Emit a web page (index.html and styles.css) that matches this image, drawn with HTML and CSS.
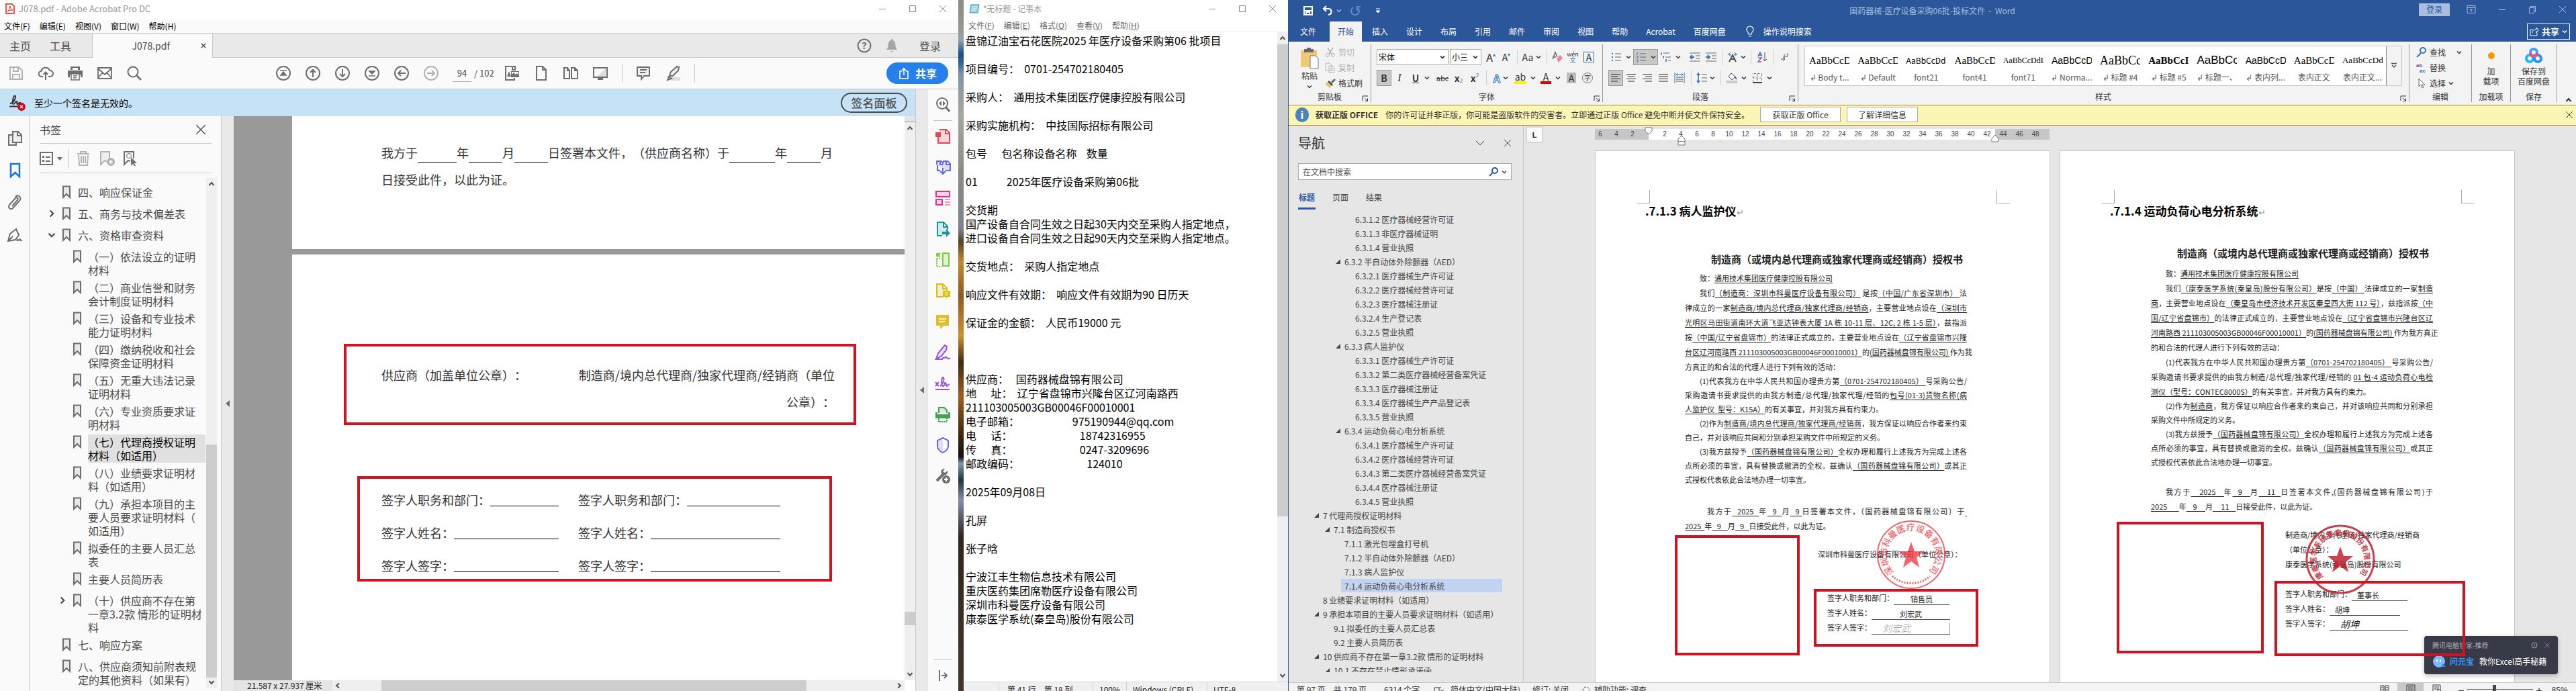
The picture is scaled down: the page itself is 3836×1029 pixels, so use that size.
FILE: index.html
```html
<!DOCTYPE html>
<html lang="zh-CN">
<head>
<meta charset="utf-8">
<title>桌面</title>
<link rel="stylesheet" href="styles.css">
</head>
<body>
<svg class="defs" aria-hidden="true">
  <symbol id="chev" viewBox="0 0 8 8"><path d="M1 2.500l3 3 3-3" fill="none" stroke="currentColor" stroke-width="1.500"/></symbol>
  <symbol id="x" viewBox="0 0 12 12"><path d="M1 1l10 10M11 1L1 11" fill="none" stroke="currentColor"/></symbol>
  <symbol id="min" viewBox="0 0 12 12"><path d="M1 6.500h10" stroke="currentColor"/></symbol>
  <symbol id="max" viewBox="0 0 12 12"><path d="M1.500 1.500h9v9h-9z" fill="none" stroke="currentColor"/></symbol>
  <symbol id="bm" viewBox="0 0 14 20"><path d="M2 1.500h10v16.500l-5-5-5 5z" fill="#e8e8e8" stroke="currentColor" stroke-width="2"/></symbol>
  <symbol id="up" viewBox="0 0 10 10"><path d="M1.500 7L5 3l3.500 4" fill="none" stroke="currentColor" stroke-width="2"/></symbol>
  <symbol id="dn" viewBox="0 0 10 10"><path d="M1.500 3L5 7l3.500-4" fill="none" stroke="currentColor" stroke-width="2"/></symbol>
  <symbol id="launch" viewBox="0 0 10 10"><path d="M1 8V1h8M4 4l4 4M8.500 4.500v4h-4" fill="none" stroke="currentColor"/></symbol>
  <symbol id="lines" viewBox="0 0 16 16"><path d="M1 2.500h14M1 6h10M1 9.500h14M1 13h10" stroke="currentColor"/></symbol>
  <symbol id="linec" viewBox="0 0 16 16"><path d="M1 2.500h14M3 6h10M1 9.500h14M3 13h10" stroke="currentColor"/></symbol>
  <symbol id="liner" viewBox="0 0 16 16"><path d="M1 2.500h14M5 6h10M1 9.500h14M5 13h10" stroke="currentColor"/></symbol>
  <symbol id="linej" viewBox="0 0 16 16"><path d="M1 2.500h14M1 6h14M1 9.500h14M1 13h14" stroke="currentColor"/></symbol>
  <symbol id="page" viewBox="0 0 24 24"><path d="M5 2h9l5 5v15H5zM14 2v5h5" fill="none" stroke="currentColor" stroke-width="2"/></symbol>
</svg>
<main class="desktop">

<section class="acro">
  <header class="a-title"><svg class="i14" viewBox="0 0 14 16"><path d="M1 1h9l3 3v11H1z" fill="#fff" stroke="#e2231a" stroke-width="1.500"/><path d="M3 12c3-2 4-5 4-8 0 3 2 5 4 6-3 0-6 1-8 2" fill="none" stroke="#e2231a"/></svg><span>J078.pdf - Adobe Acrobat Pro DC</span>
    <div class="wbtn"><button aria-label="最小化"><svg class="i12"><use href="#min"/></svg></button><button aria-label="最大化"><svg class="i12"><use href="#max"/></svg></button><button aria-label="关闭"><svg class="i12"><use href="#x"/></svg></button></div>
  </header>
  <nav class="a-menu"><button>文件(F)</button><button>编辑(E)</button><button>视图(V)</button><button>窗口(W)</button><button>帮助(H)</button></nav>
  <div class="a-tabs"><button>主页</button><button>工具</button><div class="a-tab"><span>J078.pdf</span><button aria-label="关闭标签"><svg class="i8"><use href="#x" stroke-width="2"/></svg></button></div>
    <div class="a-user"><svg class="i24" viewBox="0 0 24 24"><circle cx="12" cy="12" r="9.500" fill="none" stroke="#6e6e6e" stroke-width="2"/><text x="12" y="17" text-anchor="middle" class="q">?</text></svg><svg class="i24" viewBox="0 0 24 24"><path d="M12 2c1 0 1.500 1 1.500 2 3 1 4 4 4 8 0 3 1.500 4 2.500 6H4c1-2 2.500-3 2.500-6 0-4 1-7 4-8 0-1 .5-2 1.500-2zM10 20h4l-2 2z" fill="#a5a5a5"/></svg><button>登录</button></div>
  </div>
  <div class="a-bar">
    <div class="a-grp">
      <button aria-label="保存"><svg class="i24 dim" viewBox="0 0 24 24"><path d="M3 3h13l5 5v13H3zM8 3v6h7V3M7 21v-7h10v7" fill="none" stroke="currentColor" stroke-width="2"/></svg></button>
      <button aria-label="上传"><svg class="i24" viewBox="0 0 24 24"><path d="M8 17H6a4 4 0 0 1-.5-8A6.500 6.500 0 0 1 18 8a4.500 4.500 0 0 1 1 9h-3M12 22V11M8.500 14l3.500-3.500 3.500 3.500" fill="none" stroke="currentColor" stroke-width="2"/></svg></button>
      <button aria-label="打印"><svg class="i24" viewBox="0 0 24 24"><path d="M5 2h14v5H5zM1 8h22v10h-3v-4H4v4H1z" fill="currentColor"/><path d="M6 13h12v9H6zM9 16h6M9 19h5" fill="#fff" stroke="currentColor" stroke-width="1.500"/><path d="M8 4h8v3H8z" fill="#fafafa"/></svg></button>
      <button aria-label="邮件"><svg class="i24" viewBox="0 0 24 24"><path d="M2 4h20v16H2zM2 5l10 9L22 5M2 19l7-8M22 19l-7-8" fill="none" stroke="currentColor" stroke-width="1.800"/></svg></button>
      <button aria-label="搜索"><svg class="i24" viewBox="0 0 24 24"><circle cx="10" cy="10" r="7.500" fill="none" stroke="currentColor" stroke-width="2"/><path d="M15.500 15.500L22 22" stroke="currentColor" stroke-width="2.500"/></svg></button>
    </div>
    <div class="a-grp nav2">
      <button aria-label="首页"><svg class="i24" viewBox="0 0 24 24"><circle cx="12" cy="12" r="10" fill="none" stroke="currentColor" stroke-width="2"/><path d="M7 8h10M12 10l4 5H8z" fill="currentColor" stroke="currentColor" stroke-width="1.500"/></svg></button>
      <button aria-label="上一页"><svg class="i24" viewBox="0 0 24 24"><circle cx="12" cy="12" r="10" fill="none" stroke="currentColor" stroke-width="2"/><path d="M12 18V7M8 11l4-4 4 4" fill="none" stroke="currentColor" stroke-width="2"/></svg></button>
      <button aria-label="下一页"><svg class="i24" viewBox="0 0 24 24"><circle cx="12" cy="12" r="10" fill="none" stroke="currentColor" stroke-width="2"/><path d="M12 6v11M8 13l4 4 4-4" fill="none" stroke="currentColor" stroke-width="2"/></svg></button>
      <button aria-label="末页"><svg class="i24" viewBox="0 0 24 24"><circle cx="12" cy="12" r="10" fill="none" stroke="currentColor" stroke-width="2"/><path d="M7 16h10M12 13L8 9h8z" fill="currentColor" stroke="currentColor" stroke-width="1.500"/></svg></button>
      <button aria-label="后退"><svg class="i24" viewBox="0 0 24 24"><circle cx="12" cy="12" r="10" fill="none" stroke="currentColor" stroke-width="2"/><path d="M18 12H7M11 8l-4 4 4 4" fill="none" stroke="currentColor" stroke-width="2"/></svg></button>
      <button aria-label="前进"><svg class="i24 dim" viewBox="0 0 24 24"><circle cx="12" cy="12" r="10" fill="none" stroke="currentColor" stroke-width="2"/><path d="M6 12h11M13 8l4 4-4 4" fill="none" stroke="currentColor" stroke-width="2"/></svg></button>
    </div>
    <label class="a-pg"><input value="94" aria-label="页码"><span>/ 102</span></label>
    <div class="a-grp">
      <button aria-label="适合宽度"><svg class="i24" viewBox="0 0 24 24"><path d="M17 7V2H3v20h13v-3M13 2v5h5" fill="none" stroke="currentColor" stroke-width="2"/><path d="M5 17l3-8 3 8zM11 9h12v9H11z" fill="currentColor"/><path d="M12 14l3-3 3 3 2-2 2 3v-5H12z" fill="#fff"/></svg></button>
      <button aria-label="单页"><svg class="i24"><use href="#page"/></svg></button>
      <button aria-label="双页"><svg class="i24" viewBox="0 0 24 24"><path d="M2 4h5l3 4v12H2zM7 4v4h3M13 4h5l4 4v12h-9zM18 4v4h4" fill="none" stroke="currentColor" stroke-width="2"/></svg></button>
      <button aria-label="全屏"><svg class="i24" viewBox="0 0 24 24"><path d="M20 5v12H7z" fill="#ddd"/><path d="M2 4h20v14H2z" fill="none" stroke="currentColor" stroke-width="2"/><path d="M8 19h8v3H8z" fill="currentColor"/></svg></button>
      <i class="vsep"></i>
      <button aria-label="注释"><svg class="i24" viewBox="0 0 24 24"><path d="M3 3h18v13h-8l-4 5v-5H3zM7 7h10M7 11h8" fill="#eee" stroke="currentColor" stroke-width="2"/></svg></button>
      <button aria-label="突出显示"><svg class="i24" viewBox="0 0 24 24"><path d="M8 18h15v5H8z" fill="#ddd"/><path d="M7 16l2-6 9-8 3 1-1 5-8 8zM6 17l4 3-6 2z" fill="#eee" stroke="currentColor" stroke-width="2"/></svg></button>
      <i class="vsep"></i>
    </div>
    <button class="share"><svg class="i18" viewBox="0 0 18 18"><path d="M6 6H3v11h12V6h-3M9 12V2M6 5l3-3 3 3" fill="none" stroke="#fff" stroke-width="1.600"/></svg>共享</button>
  </div>
  <div class="a-body">
    <div class="a-main">
      <div class="a-note"><svg class="i26" viewBox="0 0 26 26"><path d="M2 14c4 0 8-5 8-10 0-2-2-2-3 1s-2 10 0 10 3-4 5-4-1 4 1 4 2-3 5-2" fill="none" stroke="#333" stroke-width="2"/><path d="M1 18.500h12" stroke="#333" stroke-width="2"/><circle cx="19" cy="19" r="6" fill="#d7001f"/><path d="M17 17l4 4m0-4l-4 4" stroke="#fff" stroke-width="1.500"/></svg><span>至少一个签名是无效的。</span><button>签名面板</button></div>
      <div class="a-work">
        <nav class="a-rail">
          <button aria-label="页面缩略图"><svg class="i24" viewBox="0 0 24 24"><path d="M9 2h8l5 5v11H9zM16 2v6h6M9 7H3v15h11v-4" fill="#eee" stroke="currentColor" stroke-width="2"/></svg></button>
          <button aria-label="书签"><svg class="i24 blue" viewBox="0 0 24 24"><path d="M6 2h13v19l-6.500-6L6 21z" fill="none" stroke="currentColor" stroke-width="2.500"/></svg></button>
          <button aria-label="附件"><svg class="i24" viewBox="0 0 24 24"><path d="M8 17l8-9c2-2-1-5-3-3l-9 10c-3 4 2 8 5 5l10-11c4-5-2-10-6-6" fill="none" stroke="currentColor" stroke-width="2"/></svg></button>
          <button aria-label="签名"><svg class="i24" viewBox="0 0 24 24"><path d="M2 21l3-11 9-7 4 9-5 7zM3 20l6-6M15 21c2-5 2 1 4-2s1 3 4 1" fill="none" stroke="currentColor" stroke-width="2"/></svg></button>
        </nav>
        <aside class="a-book">
          <header><h2>书签</h2><button aria-label="关闭"><svg class="i16"><use href="#x"/></svg></button></header>
          <div class="b-tools">
            <svg class="i20" viewBox="0 0 20 20"><path d="M1 1h18v18H1z" fill="none" stroke="currentColor" stroke-width="2"/><path d="M4 6h3v3H4zM4 12h3v3H4zM9 7h7v2H9zM9 13h7v2H9z" fill="currentColor"/></svg>
            <svg class="i8" viewBox="0 0 8 8"><path d="M0 2h8L4 7z" fill="currentColor"/></svg><i class="vsep"></i>
            <svg class="i24 dim" viewBox="0 0 24 24"><path d="M3 5h18M8 5V2h8v3M5 7l1 15h12l1-15M9 8v11M12 8v11M15 8v11" fill="none" stroke="currentColor" stroke-width="2"/></svg>
            <svg class="i24 dim" viewBox="0 0 24 24"><path d="M12 17l-3-2-6 6V2h13v10" fill="#eee" stroke="currentColor" stroke-width="2"/><circle cx="18" cy="17" r="6" fill="currentColor"/><path d="M15 17h6M18 14v6" stroke="#fff" stroke-width="1.500"/></svg>
            <svg class="i24" viewBox="0 0 24 24"><path d="M12 16l-3-1-6 6V2h14v10" fill="none" stroke="currentColor" stroke-width="2"/><circle cx="10" cy="8" r="3.500" fill="none" stroke="currentColor"/><path d="M13 10l9 9h-4l2 4-2 0-2-3-3 3z" fill="currentColor"/></svg>
          </div>
          <div class="b-wrap">
            <ul class="b-list">
              <li><b></b><svg><use href="#bm"/></svg><a href="#">四、响应保证金</a></li>
              <li><b><svg class="rot"><use href="#chev"/></svg></b><svg><use href="#bm"/></svg><a href="#">五、商务与技术偏差表</a></li>
              <li><b><svg><use href="#chev"/></svg></b><svg><use href="#bm"/></svg><a href="#">六、资格审查资料</a></li>
              <li class="k"><b></b><svg><use href="#bm"/></svg><a href="#">（一）依法设立的证明<br>材料</a></li>
              <li class="k"><b></b><svg><use href="#bm"/></svg><a href="#">（二）商业信誉和财务<br>会计制度证明材料</a></li>
              <li class="k"><b></b><svg><use href="#bm"/></svg><a href="#">（三）设备和专业技术<br>能力证明材料</a></li>
              <li class="k"><b></b><svg><use href="#bm"/></svg><a href="#">（四）缴纳税收和社会<br>保障资金证明材料</a></li>
              <li class="k"><b></b><svg><use href="#bm"/></svg><a href="#">（五）无重大违法记录<br>证明材料</a></li>
              <li class="k"><b></b><svg><use href="#bm"/></svg><a href="#">（六）专业资质要求证<br>明材料</a></li>
              <li class="k on"><b></b><svg><use href="#bm"/></svg><a href="#">（七）代理商授权证明<br>材料（如适用）</a></li>
              <li class="k"><b></b><svg><use href="#bm"/></svg><a href="#">（八）业绩要求证明材<br>料（如适用）</a></li>
              <li class="k"><b></b><svg><use href="#bm"/></svg><a href="#">（九）承担本项目的主<br>要人员要求证明材料（<br>如适用）</a></li>
              <li class="k"><b></b><svg><use href="#bm"/></svg><a href="#">拟委任的主要人员汇总<br>表</a></li>
              <li class="k"><b></b><svg><use href="#bm"/></svg><a href="#">主要人员简历表</a></li>
              <li class="k"><b><svg class="rot"><use href="#chev"/></svg></b><svg><use href="#bm"/></svg><a href="#">（十）供应商不存在第<br>一章3.2款 情形的证明材<br>料</a></li>
              <li><b></b><svg><use href="#bm"/></svg><a href="#">七、响应方案</a></li>
              <li><b></b><svg><use href="#bm"/></svg><a href="#">八、供应商须知前附表规<br>定的其他资料（如果有）</a></li>
            </ul>
            <div class="sb"><svg class="i10"><use href="#up"/></svg><i class="th1"></i><svg class="i10"><use href="#dn"/></svg></div>
          </div>
        </aside>
        <div class="strip"><svg class="i10" viewBox="0 0 10 10"><path d="M8 0v10L2 5z" fill="#6e6e6e"/></svg></div>
        <div class="a-doc">
          <div class="a-view">
            <div class="pages">
              <article class="p1">
                <p>我方于<i class="w58"></i>年<i class="w50"></i>月<i class="w50"></i>日签署本文件，（供应商名称）于<i class="w68"></i>年<i class="w50"></i>月</p>
                <p>日接受此件，以此为证。</p>
              </article>
              <article class="p2">
                <div class="box1"><p><span>供应商（加盖单位公章）：</span><span>制造商/境内总代理商/独家代理商/经销商（单位</span></p><p class="r">公章）：</p></div>
                <div class="box2">
                  <p>签字人职务和部门：<i></i></p><p>签字人职务和部门：<i></i></p>
                  <p>签字人姓名：<i></i></p><p>签字人姓名：<i></i></p>
                  <p>签字人签字：<i></i></p><p>签字人签字：<i></i></p>
                </div>
              </article>
            </div>
            <div class="sb"><i class="split"></i><svg class="i10"><use href="#up"/></svg><i class="th2"></i><svg class="i10"><use href="#dn"/></svg></div>
          </div>
          <div class="a-foot"><span>21.587 x 27.937 厘米</span><div class="hs"><svg class="i10 rotl"><use href="#dn"/></svg><i></i><svg class="i10 rot"><use href="#dn"/></svg></div></div>
        </div>
      </div>
    </div>
    <div class="strip s2"><svg class="i10" viewBox="0 0 10 10"><path d="M8 0v10L2 5z" fill="#6e6e6e"/></svg></div>
    <nav class="a-tools">
      <button aria-label="查找工具"><svg class="i24" viewBox="0 0 24 24"><circle cx="11" cy="10" r="8" fill="#fff" stroke="#6e6e6e" stroke-width="2"/><path d="M10 6v8l-4-4zM12 6v8l4-4z" fill="#6e6e6e"/><path d="M17 16l5 6" stroke="#6e6e6e" stroke-width="3"/></svg></button>
      <hr>
      <button aria-label="创建"><svg class="i24" viewBox="0 0 24 24" color="#e34850"><path d="M7 2h10l5 5v15H5V12M16 2v6h6" fill="#fad4d6" stroke="currentColor" stroke-width="2"/><path d="M1 6h8v7H1z" fill="currentColor"/></svg></button>
      <button aria-label="合并"><svg class="i24" viewBox="0 0 24 24" color="#6767ec"><path d="M3 8V3h7l2 3 1-3h6l4 4v10h-7M8 17H4V9M8 3v5h4M17 3v5h5" fill="#dedefa" stroke="currentColor" stroke-width="2"/><path d="M12 13v9M8 18l4 4 4-4" fill="none" stroke="currentColor" stroke-width="2"/></svg></button>
      <button aria-label="组织"><svg class="i24" viewBox="0 0 24 24" color="#d83790"><path d="M2 2h20v8H2zM2 14h9v8H2z" fill="#f6d3e5" stroke="currentColor" stroke-width="2"/><path d="M15 14h8M15 18h8M15 22h8" stroke="currentColor"/></svg></button>
      <button aria-label="导出"><svg class="i24" viewBox="0 0 24 24" color="#1b959a"><path d="M11 22H4V2h9l6 6v5M13 2v7h6" fill="#d1eaeb" stroke="currentColor" stroke-width="2"/><path d="M11 16h6v-4l6 6-6 6v-4h-6z" fill="currentColor"/></svg></button>
      <button aria-label="页面整理"><svg class="i24" viewBox="0 0 24 24" color="#7fce3c"><path d="M12 2h9v19h-9z" fill="#e1f3d2" stroke="currentColor" stroke-width="2"/><path d="M3 10v12h7M3 10h7" fill="none" stroke="currentColor" stroke-width="2" stroke-dasharray="2 1"/><path d="M2 2h3l4-1-2 4 2 3-7-1z" fill="currentColor"/></svg></button>
      <button aria-label="审阅"><svg class="i24" viewBox="0 0 24 24" color="#dcbf10"><path d="M12 21H3V2h9l6 6v5M12 2v7h6" fill="#f6edc4" stroke="currentColor" stroke-width="2"/><path d="M12 12h11v9h-4l-3 3v-3h-4z" fill="currentColor"/><path d="M15 15h5M15 18h4" stroke="#fff"/></svg></button>
      <button aria-label="注释"><svg class="i24" viewBox="0 0 24 24" color="#dfbf2c"><path d="M2 2h19v16h-8l-5 5v-5H2z" fill="currentColor"/><path d="M6 8h11M6 12h9" stroke="#fff" stroke-width="1.500"/></svg></button>
      <button aria-label="填写和签名"><svg class="i24" viewBox="0 0 24 24" color="#9256d9"><path d="M2 22l3-9L15 1l3 2-1 5-7 9-8 5h9c3-6 4 0 5-3s2 5 7 1" fill="#e9ddf8" stroke="currentColor" stroke-width="2"/></svg></button>
      <button aria-label="签名"><svg class="i24" viewBox="0 0 24 24" color="#9256d9"><path d="M1 10l5 6m0-6l-5 6M8 16c7-6 6-14 4-13s-3 12 0 13 2-7 4-5 0 5 2 5 1-4 4-2M1 21h21" fill="none" stroke="currentColor" stroke-width="2"/></svg></button>
      <button aria-label="扫描"><svg class="i24" viewBox="0 0 24 24" color="#3da74e"><path d="M6 10V2h8l4 4v4" fill="#d9eedb" stroke="currentColor" stroke-width="2"/><path d="M1 9h3v3h16V9h3v9H1z" fill="currentColor"/><path d="M6 18v5h12v-5" fill="#fff" stroke="currentColor" stroke-width="2" stroke-dasharray="2 1"/></svg></button>
      <button aria-label="保护"><svg class="i24" viewBox="0 0 24 24" color="#6767ec"><path d="M12 1l8 4v9c0 4-5 8-8 9-3-1-8-5-8-9V5z" fill="#fff" stroke="currentColor" stroke-width="2"/><path d="M12 3v18c-3-1-7-4-7-7V6z" fill="#dedefa"/></svg></button>
      <button aria-label="更多工具"><svg class="i24" viewBox="0 0 24 24"><path d="M3 19L13 9" stroke="#6e6e6e" stroke-width="4"/><path d="M19 4l-4 3-3-2 3-4c-6 0-7 5-4 9 4 2 9 0 8-6z" fill="#6e6e6e"/><circle cx="17" cy="17" r="6" fill="#6e6e6e"/><path d="M14 17h6M17 14v6" stroke="#fff" stroke-width="2"/></svg></button>
      <hr class="low">
      <button aria-label="折叠"><svg class="i18" viewBox="0 0 18 18"><path d="M4 1v16M7 9h8M11 5l4 4-4 4" fill="none" stroke="#6e6e6e" stroke-width="2"/></svg></button>
    </nav>
  </div>
</section>

<div class="wall"></div>

<section class="note">
  <header class="n-title"><svg class="i16" viewBox="0 0 16 16"><path d="M3 2h12l-2 12H1z" fill="#8fd0e0" stroke="#4b8fa0"/><path d="M4 5h9M4 8h8M3 11h8" stroke="#fff"/></svg><span>*无标题 - 记事本</span>
    <div class="wbtn"><button aria-label="最小化"><svg class="i12"><use href="#min"/></svg></button><button aria-label="最大化"><svg class="i12"><use href="#max"/></svg></button><button aria-label="关闭"><svg class="i12"><use href="#x"/></svg></button></div></header>
  <nav class="n-menu"><button>文件(<u>F</u>)</button><button>编辑(<u>E</u>)</button><button>格式(<u>O</u>)</button><button>查看(<u>V</u>)</button><button>帮助(<u>H</u>)</button></nav>
  <div class="n-body">
    <textarea aria-label="文本" spellcheck="false">盘锦辽油宝石花医院2025 年医疗设备采购第06 批项目

项目编号：  0701-254702180405

采购人：  通用技术集团医疗健康控股有限公司

采购实施机构：  中技国际招标有限公司

包号      包名称设备名称    数量

01            2025年医疗设备采购第06批

交货期
国产设备自合同生效之日起30天内交至采购人指定地点，
进口设备自合同生效之日起90天内交至采购人指定地点。

交货地点：  采购人指定地点

响应文件有效期：  响应文件有效期为90 日历天

保证金的金额：  人民币19000 元



供应商：   国药器械盘锦有限公司
地      址：  辽宁省盘锦市兴隆台区辽河南路西
211103005003GB00046F00010001
电子邮箱：                      975190944@qq.com
电      话：                            18742316955
传      真：                            0247-3209696
邮政编码：                            124010

2025年09月08日

孔屏

张子晗

宁波江丰生物信息技术有限公司
重庆医药集团席勒医疗设备有限公司
深圳市科曼医疗设备有限公司
康泰医学系统(秦皇岛)股份有限公司</textarea>
    <div class="sb"><svg class="i10"><use href="#up"/></svg><i class="th3"></i><svg class="i10"><use href="#dn"/></svg></div>
  </div>
  <footer class="n-stat"><span></span><span>第 41 行，第 18 列</span><span>100%</span><span>Windows (CRLF)</span><span>UTF-8</span></footer>
</section>

<section class="word">
  <header class="w-title">
    <div class="qat"><svg class="i16" viewBox="0 0 16 16"><path d="M2 2h12v12H2zM2 8h12M5 14v-4h5v4" fill="none" stroke="#fff" stroke-width="2"/></svg><svg class="i16" viewBox="0 0 16 16"><path d="M6 1L2 5l4 4M2 5h7c6 0 6 8 0 9" fill="none" stroke="#fff" stroke-width="2.200"/></svg><svg class="i8"><use href="#chev"/></svg><svg class="i16 faint" viewBox="0 0 16 16"><path d="M4 3a6 6 0 1 0 6 0M10 8V2h5" fill="none" stroke="#5f8ac6" stroke-width="2"/></svg><svg class="i8" viewBox="0 0 8 8"><path d="M1 1h6M1 4h6L4 7z" fill="#fff" stroke="#fff"/></svg></div>
    <h1>国药器械-医疗设备采购06批-投标文件&nbsp; -&nbsp; Word</h1>
    <div class="w-win"><button class="login">登录</button><svg class="i14" viewBox="0 0 14 14"><path d="M1 1.500h12v11H1zM1 4.500h12M7 11V6M5 8l2-2 2 2" fill="none" stroke="currentColor"/></svg><svg class="i12"><use href="#min"/></svg><svg class="i12" viewBox="0 0 12 12"><path d="M1.500 3.500h7v8h-7zM3.500 3V1.500h7v8H9" fill="none" stroke="currentColor"/></svg><svg class="i12"><use href="#x"/></svg></div>
  </header>
  <nav class="w-tabs"><button class="file">文件</button><button class="on">开始</button><button>插入</button><button>设计</button><button>布局</button><button>引用</button><button>邮件</button><button>审阅</button><button>视图</button><button>帮助</button><button>Acrobat</button><button>百度网盘</button><svg class="i18" viewBox="0 0 18 18"><path d="M7 13c0-3-3-4-3-7a5 5 0 0 1 10 0c0 3-3 4-3 7zM7 16h4" fill="none" stroke="#fff" stroke-width="1.200"/></svg><button class="tell">操作说明搜索</button>
    <button class="w-share"><svg class="i14" viewBox="0 0 14 14"><path d="M5 4H1v9h10V9M4 9c0-4 3-5 6-5V1l3 4-3 4V6" fill="none" stroke="#fff"/></svg>共享<svg class="i8"><use href="#chev"/></svg></button></nav>
  <div class="ribbon">
    <div class="g clip">
      <div class="gb">
        <button class="paste"><svg viewBox="0 0 28 32"><path d="M1 4h24v25H1z" fill="#f0c878"/><path d="M6 2h4a3 3 0 0 1 6 0h4v5H6z" fill="#666"/><path d="M15 12h8l4 4v15H15z" fill="#fff" stroke="#777"/></svg>粘贴<svg class="i8"><use href="#chev"/></svg></button>
        <div class="col"><button class="dim"><svg class="i16" viewBox="0 0 16 16"><path d="M4 1l6 10M12 1L6 11" stroke="currentColor" stroke-width="1.500"/><circle cx="4" cy="12" r="2.500" fill="none" stroke="currentColor"/><circle cx="12" cy="12" r="2.500" fill="none" stroke="currentColor"/></svg>剪切</button><button class="dim"><svg class="i16" viewBox="0 0 16 16"><path d="M1 1h6l3 3v8H1zM6 5h5l3 3v7H6zM8 9h4M8 12h4" fill="#f3f3f3" stroke="currentColor"/></svg>复制</button><button><svg class="i16" viewBox="0 0 16 16"><path d="M9 6l5-5 2 2-5 5z" fill="#666"/><path d="M6 4l6 6-2 2-6-6z" fill="#444"/><path d="M4 6l6 6-3 3-7-6z" fill="#f0c070"/></svg>格式刷</button></div>
      </div><div class="gl">剪贴板<svg class="i10"><use href="#launch"/></svg></div>
    </div>
    <div class="g font">
      <div class="row"><button class="combo wide">宋体<svg class="i8"><use href="#chev"/></svg></button><button class="combo">小三<svg class="i8"><use href="#chev"/></svg></button><button class="s24 big">A<sup class="bl">▴</sup></button><button class="s22">A<sup class="bl">▾</sup></button><i class="sp"></i><button class="s34">Aa<svg class="i8"><use href="#chev"/></svg></button><i class="sp"></i><button class="s22" aria-label="清除格式"><svg class="i18" viewBox="0 0 18 18"><path d="M2 12L6 2l3 7M3 9h4" fill="none" stroke="#666" stroke-width="1.500"/><path d="M8 12l5-6 4 4-6 7z" fill="#ee8296"/></svg></button><button class="s24 py">wén<em>文</em></button><button class="s24"><span class="abox">A</span></button></div>
      <div class="row"><button class="s22 sel"><strong>B</strong></button><button class="s24 ser"><em>I</em></button><button class="s40"><u><strong>U</strong></u><svg class="i8"><use href="#chev"/></svg></button><button class="s24 sm"><s>abc</s></button><button class="s24"><strong>x</strong><sub>2</sub></button><button class="s24"><strong>x</strong><sup>2</sup></button><i class="sp"></i><button class="s34"><span class="glow">A</span><svg class="i8"><use href="#chev"/></svg></button><button class="s38"><span class="ub y">ab</span><svg class="i8"><use href="#chev"/></svg></button><button class="s38"><span class="ub rd">A</span><svg class="i8"><use href="#chev"/></svg></button><button class="s24"><span class="shade">A</span></button><button class="s24"><span class="ring">字</span></button></div>
      <div class="gl">字体<svg class="i10"><use href="#launch"/></svg></div>
    </div>
    <div class="g para">
      <div class="row"><button class="s38" aria-label="项目符号"><svg class="i16" viewBox="0 0 16 16"><path d="M6 3h9M6 8h9M6 13h9" stroke="#666"/><path d="M1 2h2v2H1zM1 7h2v2H1zM1 12h2v2H1z" fill="#2e75b6"/></svg><svg class="i8"><use href="#chev"/></svg></button><button class="s38 sel" aria-label="编号"><svg class="i16" viewBox="0 0 16 16"><path d="M6 3h9M6 8h9M6 13h9" stroke="#666"/><path d="M2 1v4M1 7h2v2H1M1 12h2v3H1" stroke="#2e75b6" fill="none"/></svg><svg class="i8"><use href="#chev"/></svg></button><button class="s38" aria-label="多级列表"><svg class="i16" viewBox="0 0 16 16"><path d="M4 2h9M7 8h8M11 13h4" stroke="#666"/><path d="M1 1v4M4 6v4M8 11v4" stroke="#2e75b6" stroke-width="1.500"/></svg><svg class="i8"><use href="#chev"/></svg></button><i class="gap6"></i><button class="s24" aria-label="减少缩进"><svg class="i16" viewBox="0 0 16 16"><path d="M0 2h16M9 6h7M9 10h7M0 14h16" stroke="#666"/><path d="M7 8H1M4 5L1 8l3 3" stroke="#2e75b6" stroke-width="2" fill="none"/></svg></button><button class="s24" aria-label="增加缩进"><svg class="i16" viewBox="0 0 16 16"><path d="M0 2h16M9 6h7M9 10h7M0 14h16" stroke="#666"/><path d="M0 8h6M3 5l3 3-3 3" stroke="#2e75b6" stroke-width="2" fill="none"/></svg></button><i class="sp"></i><button class="s34" aria-label="中文版式"><svg class="i16" viewBox="0 0 16 16"><path d="M3 15L8 5l5 10M5 11h6" stroke="#555" stroke-width="2" fill="none"/><path d="M5 1L2 4l3 2M1 4h5M11 1l3 3-3 2M10 4h5" stroke="#2e75b6" fill="none"/></svg><svg class="i8"><use href="#chev"/></svg></button><i class="sp"></i><button class="s24" aria-label="排序"><svg class="i16" viewBox="0 0 16 16"><path d="M2 7l3-6 3 6M3 5h4" stroke="#2e75b6" stroke-width="1.500" fill="none"/><path d="M2 9h5l-5 6h5" stroke="#a050b0" stroke-width="1.500" fill="none"/><path d="M12 1v13M10 11l2 3 3-3" stroke="#555" fill="none"/></svg></button><i class="sp"></i><button class="s24" aria-label="显示标记"><svg class="i16" viewBox="0 0 16 16"><path d="M13 2v5H7M9 4L7 7l2 2M3 11h6M6 8l3 3-3 3" stroke="#555" fill="none"/></svg></button></div>
      <div class="row"><button class="s22 sel" aria-label="左对齐"><svg class="i16"><use href="#lines"/></svg></button><button class="s24" aria-label="居中"><svg class="i16"><use href="#linec"/></svg></button><button class="s24" aria-label="右对齐"><svg class="i16"><use href="#liner"/></svg></button><button class="s24" aria-label="两端对齐"><svg class="i16"><use href="#linej"/></svg></button><button class="s24" aria-label="分散对齐"><svg class="i16" viewBox="0 0 16 16"><path d="M1 0v16M15 0v16M3 3h10M5 1L3 3l2 2M11 1l2 2-2 2" stroke="#2e75b6" fill="none"/><path d="M3 7h10M3 10h10M3 13h10" stroke="#555"/></svg></button><i class="sp"></i><button class="s34" aria-label="行距"><svg class="i16" viewBox="0 0 16 16"><path d="M8 3h8M8 8h8M8 13h8" stroke="#666"/><path d="M3 1v14M1 4l2-3 2 3M1 12l2 3 2-3" stroke="#2e75b6" stroke-width="1.500" fill="none"/></svg><svg class="i8"><use href="#chev"/></svg></button><i class="sp"></i><button class="s38" aria-label="底纹"><svg class="i16" viewBox="0 0 16 16"><path d="M7 1l6 5-5 5-5-5z" fill="#fff" stroke="#555"/><path d="M12 5c3 1 3 3 3 6l-3-3z" fill="#2e75b6"/><path d="M0 13h16v2H0z" fill="#fff" stroke="#999"/></svg><svg class="i8"><use href="#chev"/></svg></button><button class="s38" aria-label="边框"><svg class="i16" viewBox="0 0 16 16"><path d="M1.500 14V1.500h13V14M8 2v12M2 8h12" fill="none" stroke="#666" stroke-dasharray="1 1"/><path d="M1 15h14" stroke="#444" stroke-width="2"/></svg><svg class="i8"><use href="#chev"/></svg></button></div>
      <div class="gl">段落<svg class="i10"><use href="#launch"/></svg></div>
    </div>
    <div class="g sty">
      <div class="gal">
        <button><b class="f1">AaBbCcDdE</b>↲ Body t...</button><button><b class="f1">AaBbCcDdE</b>↲ Default</button><button><b class="f2">AaBbCcDdE</b>font21</button><button><b class="f1">AaBbCcDdE</b>font41</button><button><b class="f3">AaBbCcDdEe</b>font71</button><button><b class="f4">AaBbCcDdE</b>↲ Norma...</button><button><b class="f5">AaBbCcD</b>↲ 标题 #4</button><button><b class="f1 bd">AaBbCcI</b>↲ 标题 #5</button><button><b class="f6">AaBbCcD</b>↲ 标题一、</button><button><b class="f4">AaBbCcD</b>↲ 表内列...</button><button><b class="f1">AaBbCcDdE</b>表内正文</button><button><b class="f1 sm1">AaBbCcDdE</b>表内正文...</button>
        <button class="more" aria-label="更多"><svg class="i10" viewBox="0 0 10 10"><path d="M1 1.500h8M2 4l3 3 3-3" fill="none" stroke="currentColor" stroke-width="1.500"/></svg></button>
      </div><div class="gl">样式<svg class="i10"><use href="#launch"/></svg></div>
    </div>
    <div class="g edit"><div class="col"><button><svg class="i16" viewBox="0 0 16 16"><circle cx="10" cy="5" r="4" fill="none" stroke="#2e75b6" stroke-width="2"/><path d="M7 9l-6 6" stroke="#2e75b6" stroke-width="2"/></svg>查找<i class="gap6"></i><svg class="i8"><use href="#chev"/></svg></button><button><svg class="i16" viewBox="0 0 16 16"><text x="0" y="7" class="rp">ab</text><text x="5" y="15" class="rp b">ac</text></svg>替换</button><button><svg class="i16" viewBox="0 0 16 16"><path d="M4 1v12l3-3 2 5 2-1-2-4h4z" fill="#fff" stroke="#666"/></svg>选择<svg class="i8"><use href="#chev"/></svg></button></div><div class="gl">编辑</div></div>
    <div class="g add"><button class="bigb"><svg class="i26" viewBox="0 0 26 26"><circle cx="13" cy="13" r="5" fill="#ff9500"/></svg>加<br>载项</button><div class="gl">加载项</div></div>
    <div class="g save"><button class="bigb"><svg class="i26" viewBox="0 0 26 26"><circle cx="13" cy="8" r="5" fill="none" stroke="#3aa0ff" stroke-width="4"/><circle cx="7" cy="17" r="5" fill="none" stroke="#1cb6ff" stroke-width="4"/><circle cx="19" cy="17" r="5" fill="none" stroke="#2a8cf5" stroke-width="4"/><path d="M8 9a5 5 0 0 0 10 0" fill="none" stroke="#f2506a" stroke-width="4"/></svg>保存到<br>百度网盘</button><div class="gl">保存</div></div>
    <svg class="i10 coll"><use href="#up"/></svg>
  </div>
  <div class="warn"><span class="info">i</span><strong>获取正版 OFFICE</strong><span>你的许可证并非正版，你可能是盗版软件的受害者。立即通过正版 Office 避免中断并使文件保持安全。</span><button class="get">获取正版 Office</button><button>了解详细信息</button><svg class="i12"><use href="#x"/></svg></div>
  <div class="w-body">
    <aside class="w-nav">
      <header><h2>导航</h2><svg class="i14" viewBox="0 0 14 14"><path d="M1 4l6 6 6-6" fill="none" stroke="currentColor"/></svg><svg class="i12"><use href="#x"/></svg></header>
      <div class="find"><input placeholder="在文档中搜索" aria-label="在文档中搜索"><svg class="i14" viewBox="0 0 14 14"><circle cx="9" cy="5" r="4" fill="none" stroke="#2b579a" stroke-width="2"/><path d="M6 8l-5 5" stroke="#2b579a" stroke-width="2"/></svg><svg class="i8"><use href="#chev"/></svg></div>
      <div class="ntabs"><button class="on">标题</button><button>页面</button><button>结果</button></div>
      <ul class="tree">
        <li class="l4">6.3.1.2 医疗器械经营许可证</li><li class="l4">6.3.1.3 非医疗器械证明</li><li class="l4">6.3.1.4 营业执照</li>
        <li class="l3 o">6.3.2 半自动体外除颤器（AED）</li><li class="l4">6.3.2.1 医疗器械生产许可证</li><li class="l4">6.3.2.2 医疗器械经营许可证</li><li class="l4">6.3.2.3 医疗器械注册证</li><li class="l4">6.3.2.4 生产登记表</li><li class="l4">6.3.2.5 营业执照</li>
        <li class="l3 o">6.3.3 病人监护仪</li><li class="l4">6.3.3.1 医疗器械生产许可证</li><li class="l4">6.3.3.2 第二类医疗器械经营备案凭证</li><li class="l4">6.3.3.3 医疗器械注册证</li><li class="l4">6.3.3.4 医疗器械生产产品登记表</li><li class="l4">6.3.3.5 营业执照</li>
        <li class="l3 o">6.3.4 运动负荷心电分析系统</li><li class="l4">6.3.4.1 医疗器械生产许可证</li><li class="l4">6.3.4.2 医疗器械经营许可证</li><li class="l4">6.3.4.3 第二类医疗器械经营备案凭证</li><li class="l4">6.3.4.4 医疗器械注册证</li><li class="l4">6.3.4.5 营业执照</li>
        <li class="l1 o">7 代理商授权证明材料</li><li class="l2 o">7.1 制造商授权书</li><li class="l3">7.1.1 激光包埋盒打号机</li><li class="l3">7.1.2 半自动体外除颤器（AED）</li><li class="l3">7.1.3 病人监护仪</li><li class="l3 cur">7.1.4 运动负荷心电分析系统</li>
        <li class="l1">8 业绩要求证明材料（如适用）</li><li class="l1 o">9 承担本项目的主要人员要求证明材料（如适用）</li><li class="l2">9.1 拟委任的主要人员汇总表</li><li class="l2">9.2 主要人员简历表</li><li class="l1 o">10 供应商不存在第一章3.2款 情形的证明材料</li><li class="l2 o">10.1 不存在禁止情形承诺函</li>
      </ul>
    </aside>
    <div class="canvas">
      <div class="rulers"><span class="lsel">L</span>
        <div class="ruler"><div class="dk lf"><i>6</i><i>4</i><i>2</i></div><div class="wt"><i>2</i><i>4</i><i>6</i><i>8</i><i>10</i><i>12</i><i>14</i><i>16</i><i>18</i><i>20</i><i>22</i><i>24</i><i>26</i><i>28</i><i>30</i><i>32</i><i>34</i><i>36</i><i>38</i><i>40</i><i>42</i></div><div class="dk rt"><i>44</i><i>46</i><i>48</i></div>
          <svg class="mk m1" viewBox="0 0 12 12"><path d="M1 1h10v5l-5 5-5-5z" fill="#fff" stroke="#777"/></svg><svg class="mk m2" viewBox="0 0 12 16"><path d="M1 15V6l5-5 5 5v9zM1 9.500h10" fill="#fff" stroke="#777"/></svg><svg class="mk m3" viewBox="0 0 12 12"><path d="M1 11V6l5-5 5 5v5z" fill="#fff" stroke="#777"/></svg></div>
      </div>
      <div class="papers">
        <article class="paper">
          <i class="cn tl"></i><i class="cn tr"></i>
          <h3>.7.1.3 病人监护仪<small>↵</small></h3>
          <div class="scan">
            <h4 class="t1">制造商（或境内总代理商或独家代理商或经销商）授权书</h4>
            <div class="h22"><p class="in">致：<u>通用技术集团医疗健康控股有限公司</u></p>
            <p class="in full">我们<u>（制造商：深圳市科曼医疗设备有限公司）</u> 是按<u>（中国/广东省深圳市） </u>法</p>
            <p class="full">律成立的一家<u>制造商/境内总代理商/独家代理商/经销商</u>，主要营业地点设在<u>（深圳市</u></p>
            <p class="full"><u>光明区马田街道南环大道飞亚达钟表大厦 1A 栋 10-11 层、12C, 2 栋 1-5 层）</u>，兹指派</p>
            <p class="full">按<u>（中国/辽宁省盘锦市）</u>的法律正式成立的，主要营业地点设在<u>（辽宁省盘锦市兴隆</u></p>
            <p class="full"><u>台区辽河南路西 211103005003GB00046F00010001）</u>的<u>(国药器械盘锦有限公司) </u>作为我</p>
            <p>方真正的和合法的代理人进行下列有效的活动：</p></div>
            <div class="h21"><p class="in full">(1)代表我方在中华人民共和国办理贵方第<u>（0701-254702180405） </u>号采购公告/</p>
            <p class="full">采购邀请书要求提供的由我方制造/总代理/独家代理/经销的<u>包号(01-3)货物名称(病</u></p>
            <p><u>人监护仪&nbsp; 型号：K15A）</u>的有关事宜，并对我方具有约束力。</p>
            <p class="in full">(2)作为<u>制造商/境内总代理商/独家代理商/经销商</u>，我方保证以响应合作者来约束</p>
            <p>自己，并对该响应共同和分别承担采购文件中所规定的义务。</p>
            <p class="in full">(3)我方兹授予<u>（国药器械盘锦有限公司）</u>全权办理和履行上述我方为完成上述各</p>
            <p class="full">点所必须的事宜，具有替换或撤消的全权。兹确认<u>（国药器械盘锦有限公司）</u>或其正</p>
            <p>式授权代表依此合法地办理一切事宜。</p></div>
            <div class="h22 d1"><p class="in3 full">我方于<u>&nbsp; 2025&nbsp; </u>年<u>&nbsp; 9&nbsp; </u>月<u>&nbsp; 9&nbsp;</u>日签署本文件，（国药器械盘锦有限公司）于<u>&nbsp;</u></p>
            <p><u>2025&nbsp; </u>年<u>&nbsp;&nbsp; 9&nbsp;&nbsp;&nbsp; </u>月<u>&nbsp;&nbsp; 9&nbsp;&nbsp; </u>日接受此件，以此为证。</p></div>
            <div class="h22 c1"><p>深圳市科曼医疗设备有限公司（单位公章）：</p></div>
            <div class="h22 s1"><p>签字人职务和部门：<span class="v w83">销售员</span></p><p>签字人姓名：<span class="v w117">刘宏武</span></p><p>签字人签字：<span class="v w117 sig g">刘宏武</span></p></div>
          </div>
          <svg class="stamp st1" viewBox="0 0 104 104"><defs><path id="arc1" d="M27 78A36 36 0 1 1 77 78"/></defs><circle cx="52" cy="52" r="50" fill="none" stroke="currentColor" stroke-width="2"/><text><textPath href="#arc1">深圳市科曼医疗设备有限公司</textPath></text><path d="M52 33l5 14h14l-11 9 4 15-12-9-12 9 4-15-11-9h14z" fill="currentColor"/><path d="M24 84a42 42 0 0 0 56 0" fill="none" stroke="currentColor" stroke-width="3" stroke-dasharray="2 2"/></svg>
          <i class="red r1"></i><i class="red r2"></i>
        </article>
        <article class="paper">
          <i class="cn tl"></i><i class="cn tr"></i>
          <h3>.7.1.4 运动负荷心电分析系统<small>↵</small></h3>
          <div class="scan b2">
            <h4 class="t2">制造商（或境内总代理商或独家代理商或经销商）授权书</h4>
            <div class="h22"><p class="in">致：<u>通用技术集团医疗健康控股有限公司</u></p>
            <p class="in full">我们<u>（康泰医学系统(秦皇岛)股份有限公司）</u>是按<u>（中国） </u>法律成立的一家<u>制造</u></p>
            <p class="full"><u>商</u>，主要营业地点设在<u>（秦皇岛市经济技术开发区秦皇西大街 112 号）</u>，兹指派按<u>（中</u></p>
            <p class="full"><u>国/辽宁省盘锦市）</u>的法律正式成立的，主要营业地点设在<u>（辽宁省盘锦市兴隆台区辽</u></p>
            <p class="full"><u>河南路西 211103005003GB00046F00010001）</u>的<u>(国药器械盘锦有限公司) </u>作为我方真正</p>
            <p>的和合法的代理人进行下列有效的活动：</p>
            <p class="in full">(1)代表我方在中华人民共和国办理贵方第<u>（0701-254702180405） </u>号采购公告/</p>
            <p class="full">采购邀请书要求提供的由我方制造/总代理/独家代理/经销的 <u>01 包-4 运动负荷心电检</u></p>
            <p><u>测仪（型号：CONTEC8000S）</u>的有关事宜，并对我方具有约束力。</p></div>
            <div class="h21"><p class="in full">(2)作为<u>制造商</u>，我方保证以响应合作者来约束自己，并对该响应共同和分别承担</p>
            <p>采购文件中所规定的义务。</p>
            <p class="in full">(3)我方兹授予<u>（国药器械盘锦有限公司）</u>全权办理和履行上述我方为完成上述各</p>
            <p class="full">点所必须的事宜，具有替换或撤消的全权。兹确认<u>（国药器械盘锦有限公司）</u>或其正</p>
            <p>式授权代表依此合法地办理一切事宜。</p></div>
            <div class="h22 d2"><p class="in full">我方于<u>&nbsp;&nbsp; 2025&nbsp;&nbsp; </u>年<u>&nbsp; 9&nbsp;&nbsp; </u>月<u>&nbsp;&nbsp; 11&nbsp; </u>日签署本文件,(国药器械盘锦有限公司)于</p>
            <p><u>2025&nbsp;&nbsp;&nbsp;&nbsp;&nbsp;&nbsp; </u>年<u>&nbsp;&nbsp;&nbsp; 9&nbsp;&nbsp;&nbsp;&nbsp; </u>月<u>&nbsp;&nbsp;&nbsp;&nbsp; 11&nbsp;&nbsp;&nbsp; </u>日接受此件，以此为证。</p></div>
            <div class="h22 c2"><p>制造商/境内总代理商/独家代理商/经销商</p><p>（单位公章）：</p><p>康泰医学系统(秦皇岛)股份有限公司</p></div>
            <div class="h22 s2"><p>签字人职务和部门：<span class="v w83 le">董事长</span></p><p>签字人姓名：<span class="v w105 le">胡坤</span></p><p>签字人签字：<span class="v w117 sig le2">胡坤</span></p></div>
          </div>
          <svg class="stamp st2" viewBox="0 0 104 104"><defs><path id="arc2" d="M27 78A36 36 0 1 1 77 78"/></defs><circle cx="52" cy="52" r="50" fill="none" stroke="currentColor" stroke-width="3"/><text><textPath href="#arc2">康泰医学系统秦皇岛股份有限公司</textPath></text><path d="M52 33l5 14h14l-11 9 4 15-12-9-12 9 4-15-11-9h14z" fill="currentColor"/></svg>
          <i class="red r3"></i>
          <aside class="toast"><header>腾讯电脑管家-推荐<svg class="i10" viewBox="0 0 10 10"><circle cx="5" cy="5" r="4" fill="none" stroke="currentColor"/><circle cx="5" cy="5" r="1" fill="currentColor"/></svg><svg class="i8"><use href="#x"/></svg></header><p><svg class="i20" viewBox="0 0 20 20"><circle cx="10" cy="10" r="9" fill="#7cb8ff"/><path d="M13 18h7l-4-5z" fill="#2f8cff"/><path d="M7 7v4M12 7v4" stroke="#fff" stroke-width="2"/></svg><strong>问元宝</strong><span>教你Excel高手秘籍</span></p></aside>
          <i class="red r4"></i>
        </article>
      </div>
    </div>
  </div>
  <footer class="w-stat"><span class="a">第 97 页，共 179 页</span><span class="b">6314 个字</span><svg class="i16" viewBox="0 0 16 16"><path d="M8 3H1v11h7zM8 3h3M10 6l5 5m0-5l-5 5" fill="none" stroke="currentColor"/></svg><span class="c">简体中文(中国大陆)</span><span class="d">修订: 关闭</span><svg class="i14" viewBox="0 0 14 14"><circle cx="6" cy="7" r="5" fill="none" stroke="currentColor" stroke-dasharray="3 2"/></svg><span>辅助功能: 调查</span>
    <div class="views"><button aria-label="阅读视图"><svg class="i16" viewBox="0 0 16 16"><path d="M2 2h5v12H2zM9 2h5v12H9zM3 5h3M3 8h3M10 5h3M10 8h3" fill="none" stroke="currentColor"/></svg></button><button class="on" aria-label="页面视图"><svg class="i16" viewBox="0 0 16 16"><path d="M2 1h12v14H2zM4 4h8M4 7h8M4 10h8" fill="none" stroke="currentColor"/></svg></button><button aria-label="Web 版式"><svg class="i16" viewBox="0 0 16 16"><path d="M2 1h11v14H2zM4 4h7M4 7h7" fill="none" stroke="currentColor"/><circle cx="11" cy="11" r="3" fill="#fff" stroke="currentColor"/></svg></button></div><span class="zm">−</span><input type="range" min="0" max="100" value="41" aria-label="缩放"><span class="zm">+</span><span class="pc">85%</span></footer>
</section>
</main>
</body>
</html>
```
FILE: styles.css
```css
*{box-sizing:border-box}
body{margin:0;height:100vh;overflow:hidden;font:12px/16px "Noto Sans CJK SC","Noto Sans",sans-serif;color:#222}
button{font:inherit;color:inherit;background:none;border:0;padding:0;display:inline-flex;align-items:center;justify-content:center;white-space:nowrap}
h1,h2,h3,h4,p,ul{margin:0;padding:0;font-weight:400}
ul{list-style:none}
i{font-style:normal}
svg{flex:none;display:block}
.defs{position:absolute;width:0;height:0}
.i8{width:8px;height:8px}.i10{width:10px;height:10px}.i12{width:12px;height:12px}.i14{width:14px;height:14px}.i16{width:16px;height:16px}.i18{width:18px;height:18px}.i20{width:20px;height:20px}.i24{width:24px;height:24px}.i26{width:26px;height:26px}
.rot{transform:rotate(-90deg)}.rotl{transform:rotate(90deg)}
.desktop{display:grid;grid-template-columns:1427fr 8px 483fr 1918fr;height:100%}
.desktop>*{min-width:0;min-height:0}

/* Acrobat */
.acro{display:flex;flex-direction:column;background:#fafafa;color:#4b4b4b}
.a-title{height:29px;background:#fff;display:flex;align-items:center;padding:0 17px 3px 8px;gap:6px;color:#999;font-size:13px}
.a-title .i14{height:18px}
.wbtn{margin-left:auto;display:flex;gap:33px;color:#888}
.a-menu{height:21px;display:flex;gap:14px;padding:0 6px;color:#000;border-bottom:1px solid #c8c8c8}
.a-tabs{height:36px;background:#e9e9e9;border-bottom:1px solid #c8c8c8;display:flex;font-size:16px}
.a-tabs>button{width:60px}
.a-tabs>button+button{margin-left:0}
.a-tab{margin-left:17px;width:180px;height:36px;background:#fafafa;border:1px solid #c8c8c8;border-width:0 1px;font-size:14px;display:flex;align-items:center;justify-content:flex-end;gap:46px;padding-right:9px}
.a-user{margin-left:auto;display:flex;align-items:center;gap:17px;padding-right:26px}
.a-user button{margin-left:12px}
.q{font:bold 14px "Open Sans",sans-serif;fill:#6e6e6e}
.a-bar{height:47px;border-bottom:1px solid #c8c8c8;display:flex;align-items:center;padding:0 15px 0 12px;color:#6e6e6e}
.a-grp{display:flex;gap:20px;align-items:center}
.nav2{margin-left:198px}
.dim{color:#b3b3b3}
.vsep{width:1px;height:28px;background:#c8c8c8}
.a-grp .vsep{margin-right:-1px}
.a-pg{display:flex;align-items:center;gap:4px;width:96px;padding-left:20px;font-size:13px;color:#4b4b4b}
.a-pg input{width:28px;height:26px;border:0;border-bottom:1px solid #b0b0b0;background:none;text-align:center;font:inherit;color:inherit;padding:0}
.share{margin-left:auto;width:92px;height:32px;border-radius:16px;background:#2680eb;color:#fff;font-weight:700;font-size:16px;gap:8px}
.a-body{flex:1;display:flex;min-height:0}
.a-main{flex:1;display:flex;flex-direction:column;min-width:0}
.a-note{height:40px;background:#c6e2f7;display:flex;align-items:center;padding:0 12px 0 13px;gap:12px;font-size:14px;color:#000}
.a-note button{margin-left:auto;width:99px;height:30px;border:2px solid #4b4b4b;border-radius:15px;font-size:17px;font-weight:500;color:#4b4b4b}
.a-work{flex:1;display:flex;min-height:0}
.a-rail{width:44px;border-right:1px solid #c8c8c8;display:flex;flex-direction:column;align-items:center;gap:24px;padding-top:21px;color:#6e6e6e}
.blue{color:#1473e6}
.a-book{width:286px;border-right:1px solid #c8c8c8;padding:0 6px 0 15px;display:flex;flex-direction:column}
.a-book header{height:41px;display:flex;align-items:center;justify-content:space-between;border-bottom:1px solid #c8c8c8;margin-right:8px;padding-right:8px}
.a-book h2{font-size:16px}
.b-tools{height:44px;display:flex;align-items:center;gap:6px;border-bottom:1px solid #c8c8c8;margin-right:8px;color:#6e6e6e}
.b-tools .vsep{height:28px;margin:0 3px}
.b-tools .i24{margin-right:5px}
.b-wrap{flex:1;display:flex;min-height:0;padding-top:7px;overflow:hidden}
.b-list{flex:1;padding-top:8px;overflow:hidden}
.b-list li{display:flex;min-height:32px;padding:3px 0;font-size:16px;line-height:20px}
.b-list li>b{width:33px;padding:4px 0 0 12px}
.b-list b svg{width:12px;height:12px}
.b-list li>svg{width:14px;height:20px;color:#6e6e6e;margin:0 10px 0 0}
.b-list a{color:#4b4b4b;text-decoration:none;white-space:nowrap;padding:1px 0;margin:-1px 0}
.b-list .k>b{width:49px;padding-left:28px}
.b-list .k>svg{margin-right:9px}
.b-list .on a{background:#e0e0e0;color:#000;width:175px}
.sb{width:16px;background:#efefef;display:flex;flex-direction:column;align-items:center;color:#555;padding:4px 0}
.sb>i{width:16px;background:#cdcdcd}
.sb>svg:last-child{margin-top:auto}
.th1{height:347px;margin-top:383px}
.b-wrap .sb{margin-bottom:4px}
.strip{width:18px;background:#e9e9e9;padding:423px 0 0 4px}
.s2.strip{border-left:1px solid #c8c8c8;border-right:1px solid #c8c8c8;padding-top:443px}
.a-doc{flex:1;display:flex;flex-direction:column;min-width:0}
.a-view{flex:1;display:flex;background:#999;min-height:0}
.pages{flex:1;margin-left:87px;display:flex;flex-direction:column;gap:8px;font-size:18px;color:#333;font-weight:300;white-space:nowrap;min-width:0;text-spacing-trim:space-all}
.pages article{background:#fff}
.p1{height:198px;padding:34px 0 0 133px;line-height:40px}
.p1 i{display:inline-block;height:23px;vertical-align:middle;border-bottom:1px solid #000}
.w58{width:58px}.w50{width:50px}.w68{width:68px}
.p2{flex:1;padding-top:133px}
.box1,.box2{border:4px solid #d01222}
.box1{width:763px;height:121px;margin-left:77px;padding:22px 28px 0 52px;line-height:40px}
.box1 p{display:flex;justify-content:space-between}
.box1 .r{justify-content:flex-end}
.box2{width:707px;height:157px;margin:76px 0 0 97px;padding:7px 32px 0;display:grid;grid-template-columns:264px 301px;column-gap:29px;grid-auto-rows:49px;line-height:49px}
.box2 p{display:flex}
.box2 i{flex:1;border-bottom:1px solid #000;height:34px}
.a-view .sb{background:#efefef;padding-top:0}
.a-view .sb .split{height:9px;background:#e4e4e4;border-bottom:1px solid #999;margin-bottom:4px}
.sb .th2{height:20px;margin-top:715px}
.a-foot{height:16px;display:flex;background:#fff;padding-right:16px}
.a-foot span{width:147px;background:#e4e4e4;color:#222;padding-left:20px;font-size:12px;white-space:nowrap}
.hs{flex:1;background:#efefef;display:flex;align-items:center;padding:0 3px;color:#555}
.hs i{width:633px;height:16px;background:#cdcdcd;margin:0 auto 0 60px}
.a-tools{width:46px;display:flex;flex-direction:column;align-items:center;gap:22px;padding:11px 0}
.a-tools hr{width:28px;height:1px;border:0;background:#c8c8c8;margin:-11px 0 -11px;flex:none}
.a-tools .low{margin:auto 0 -8px}
.a-tools button:last-child{margin-bottom:3px}

.wall{background:linear-gradient(#8b8d88,#9a968a 45px,#8fa3b4 60px,#1d4f87 80px,#2a5f93 92px,#7e93a5 110px,#a6a79d 170px,#8a8a85 260px,#7d848c 340px,#54452b 360px,#c48a2c 390px,#8c5a20 440px,#d0912a 500px,#3c2a15 540px,#a06018 590px,#4a2c14 640px,#16100d 680px,#7b9ab0 690px,#24333a 715px,#8390ad 745px,#4a4a50 780px,#33251c 800px,#44362b)}

/* Notepad */
.note{display:flex;flex-direction:column;background:#fff}
.n-title{height:29px;display:flex;align-items:center;gap:5px;padding:0 17px 3px 8px;color:#999}
.n-menu{height:19px;display:flex;gap:14px;padding-left:7px;color:#666;border-bottom:1px solid #eee}
.n-body{flex:1;display:flex;min-height:0}
.n-body textarea{flex:1;min-width:0;border:0;outline:0;resize:none;overflow:hidden;padding:2px 3px;font:16px/21px "Noto Sans CJK SC",sans-serif;color:#000;white-space:pre}
.th3{height:703px;margin-top:4px}
.n-stat{height:14px;background:#f0f0f0;border-top:1px solid #d7d7d7;overflow:hidden;display:flex;color:#222;line-height:21px}
.n-stat span{border-left:1px solid #d0d0d0;padding-left:9px;width:120px;white-space:nowrap}
.n-stat span:nth-child(1){width:52px;border:0}
.n-stat span:nth-child(2){width:140px;padding-left:12px}
.n-stat span:nth-child(3){width:50px}

/* Word */
.word{display:flex;flex-direction:column;background:#e6e6e6;border-left:1px solid #2b579a}
.w-title{height:32px;background:#2b579a;color:#a9bddc;display:grid;grid-template-columns:1fr auto 1fr;align-items:center}
.qat{display:flex;align-items:center;gap:13px;padding-left:21px}
.qat .i8{margin-left:-8px}
.qat .i8:last-child{margin-left:8px}
.w-title h1{font-size:12px}
.w-win{display:flex;justify-content:flex-end;align-items:center;gap:33px;padding:0 14px 4px 0}
.login{width:46px;height:19px;background:#a9bddc;color:#2b579a;margin-right:-8px;border-radius:1px}
.w-tabs{height:30px;background:#2b579a;color:#fff;display:flex;align-items:center;gap:3px;padding:0 9px 0 5px}
.w-tabs button{height:30px;padding:0 12px}
.w-tabs .file{margin-right:5px}
.w-tabs .on{background:#f3f3f3;color:#2b579a;padding:0 12px}
.w-tabs .i18{margin:0 -4px 0 12px}
.w-tabs .w-share{margin-left:auto;width:64px;height:24px;border:1px solid #fff;padding:0;gap:4px;font-weight:700;font-size:13px}
.ribbon{height:94px;background:#f3f3f3;display:flex;padding:4px 0;color:#333}
.g{border-right:1px solid #999;height:86px;position:relative;display:flex;flex-direction:column;padding:0 8px}
.gl{margin-top:auto;height:16px;text-align:center}
.gl .i10{position:absolute;right:3px;bottom:0}
.clip{width:123px}
.gb{display:flex;gap:6px;padding-left:6px}
.paste{flex-direction:column;width:34px;padding-top:2px;gap:2px}
.paste svg:first-child{width:28px;height:32px}
.paste .i8{margin-top:2px}
.col{display:flex;flex-direction:column}
.col button{height:23px;gap:4px;justify-content:flex-start}
.font{width:345px}
.para{width:291px}
.row{display:flex;height:31px;align-items:center;font-size:14px}
.row:first-child{padding-top:6px}
.row+.row{padding-top:7px}
.font .row .combo{width:47px;height:24px;border:1px solid #ababab;background:#fff;justify-content:space-between;padding:0 4px 0 2px;margin-right:2px;font-size:12px;color:#111}
.font .row .wide{width:107px}
.row button{height:24px}
.s22{width:22px}.s24{width:24px}.s34{width:34px;gap:4px}.s38{width:38px;gap:6px}.s40{width:40px;gap:8px}
.row .gap6{width:6px}.gap6{width:8px}
.big{font-size:16px}
.row sup,.row sub{font-size:8px;line-height:8px;color:#2e75b6}
.row sup{margin-bottom:8px}.row sub{margin-top:8px}
.sel{background:#c8c8c8;border:1px solid #999}
.sp{width:10px;height:22px;background:linear-gradient(90deg,transparent 5px,#d0d0d0 5px 6px,transparent 6px)}
.row .py{flex-direction:column;font-size:9px;line-height:9px}
.py em{font-style:normal;color:#2e75b6}
.abox{border:1px solid #2e75b6;line-height:14px;padding:0 3px}
.ser{font-family:"Liberation Serif",serif;font-size:16px}
.sm{font-size:11px}
.glow{color:#fff;-webkit-text-stroke:1px #2e75b6;font-weight:700;font-size:16px}
.ub{border-bottom:4px solid #fff000;line-height:14px;padding:0 1px}
.ub.rd{border-color:#e00000;padding:0 4px}
.shade{background:#bdbdbd;padding:0 3px}
.ring{border:1px solid #777;border-radius:8px;font-size:10px;line-height:14px;width:16px}
.sty{flex:1;min-width:0;padding:2px 10px 0 9px}
.gal{display:flex;height:60px;background:#fff;border:1px solid #c8c8c8;overflow:hidden}
.gal button{flex:1 1 72px;min-width:0;flex-direction:column;align-items:center;gap:6px;color:#555;font-size:12px;justify-content:flex-start;padding-top:8px}
.gal b{font-weight:400;width:60px;overflow:hidden;text-align:left;height:24px;line-height:26px;color:#000}
.gal .f1{font-family:"Liberation Serif",serif;font-size:15px}
.gal .f2{font-size:12px}
.gal .f3{font-family:"Liberation Serif",serif;font-size:12px}
.gal .f4{font-family:"Liberation Sans",sans-serif;font-size:14px}
.gal .f5{font-family:"Liberation Serif",serif;font-size:18px}
.gal .f6{font-family:"Liberation Sans",sans-serif;font-size:17px}
.gal b.bd{font-weight:700}.gal b.sm1{font-size:13px}
.gal .more{flex:0 0 24px;border:1px solid #888;background:#f3f3f3;padding-top:24px;margin:-1px}
.edit{width:93px;padding:0 10px}
.add{width:58px}.save{width:69px}
.g.add,.g.save{padding:0}
.bigb{flex-direction:column;line-height:15px;padding-top:4px;gap:2px}
.rp{font:bold 8px "Liberation Sans",sans-serif;fill:#8050a0}.rp.b{fill:#2e75b6}
.coll{margin:78px 6px 0 12px}
.warn{height:31px;background:#fcf6b6;border:1px solid #b08a10;border-width:1px 0;display:flex;align-items:center;padding:0 4px 2px 10px;color:#333}
.info{width:20px;height:22px;border-radius:11px;background:#4b83bd;color:#fff;font:bold 16px/22px "Open Sans",sans-serif;text-align:center;margin-right:10px}
.warn strong{margin-right:11px}
.warn button{width:106px;height:23px;border:1px solid #ababab;background:#fff;margin-left:9px}
.warn .get{width:120px;margin-left:16px}
.warn>svg{margin-left:auto}
.w-body{flex:1;display:flex;min-height:0}
.w-nav{width:350px;border-right:1px solid #c6c6c6;padding:0 17px 0 14px;display:flex;flex-direction:column;color:#444}
.w-nav header{height:56px;display:flex;align-items:center;gap:28px;padding-bottom:5px}
.w-nav h2{font-size:20px;margin-right:auto;color:#333}
.find{height:25px;flex:none;background:#fff;border:1px solid #ababab;display:flex;align-items:center;padding:0 6px;gap:5px}
.find input{flex:1;min-width:0;border:0;background:none;font:inherit;padding:0}
.find input::placeholder{color:#555}
.ntabs{display:flex;gap:24px;padding-top:18px;height:48px;flex:none}
.ntabs button{height:26px;align-items:flex-start;width:26px}
.ntabs .on{color:#2b579a;font-weight:700;border-bottom:3px solid #2b579a}
.tree{flex:1;overflow:hidden;margin-bottom:15px;white-space:nowrap}
.tree li{height:21px;line-height:20px;display:flex;align-items:center}
.tree li::before{content:"";width:7px;height:7px;margin-right:6px}
.tree .o::before{background:#444;clip-path:polygon(100% 0,100% 100%,0 100%)}
.l1{padding-left:24px}.l2{padding-left:40px}.l3{padding-left:56px}.l4{padding-left:72px}
.tree .cur{background:linear-gradient(#c2d3f2,#c2d3f2) 64px 0/240px 20px no-repeat}
.canvas{flex:1;display:flex;flex-direction:column;min-width:0;overflow:hidden}
.rulers{height:37px;flex:none;display:flex;align-items:flex-start;padding:1px 0 0 3px}
.lsel{width:26px;height:25px;border:2px solid #d6d6d6;background:#fafafa;text-align:center;font:bold 11px/22px "Liberation Sans",sans-serif}
.ruler{display:flex;height:16px;margin:4px 0 0 77px;font:10px/16px "Liberation Sans",sans-serif;color:#444;position:relative}
.ruler i{width:24px;flex:none;text-align:center}
.ruler>div{display:flex;overflow:hidden}
.dk{background:#c6c6c6}
.lf{width:80px;justify-content:flex-end;padding-right:12px}
.wt{width:516px;background:#fff;padding-left:12px}
.rt{width:81px}
.mk{position:absolute;width:12px;height:12px}
.m1{left:74px;top:-3px}.m2{left:123px;top:9px;height:16px}.m3{left:590px;top:8px}
.papers{flex:1;display:flex;gap:14px;padding-left:106px;min-height:0}
.paper{flex:0 0 678px;background:#fff;border:1px solid #c6c6c6;border-bottom:0;position:relative;padding-top:76px;color:#222}
.cn{position:absolute;width:20px;height:20px;top:58px;border:1px solid #aaa;border-width:0 1px 1px 0;left:61px}
.cn.tr{left:597px;border-width:0 0 1px 1px}
.paper h3{font:700 17px/26px "Noto Sans CJK SC",sans-serif;padding-left:74px;color:#000;white-space:nowrap}
.paper h3 small{font-size:13px;color:#999;font-weight:400}
.scan{width:420px;margin-left:133px;font-size:11px;white-space:nowrap}
.b2{margin-left:135px}
.scan h4{font:700 15px/20px "Noto Sans CJK SC",sans-serif;margin:47px 6px 7px 39px}
.scan h4.t2{margin:38px 6px 9px 39px}
.h22{line-height:22px}.h21{line-height:21px}
.h22 p{height:22px}.h21 p{height:21px}
.scan u{text-underline-offset:2px}
.in{padding-left:22px}.in3{padding-left:33px}
.full{text-align-last:justify}
.d1{margin-top:25px}.d2{margin-top:22px}
.c1{margin:20px 0 0 198px}.c2{margin:20px 0 0 200px}
.s1{margin:43px 0 0 212px}.h22.s2{margin:22px 0 0 200px}
.v{display:inline-block;height:18px;line-height:18px;border-bottom:1px solid #555;text-align:center;vertical-align:middle}
.v.le{text-align:left;padding-left:8px}
.w83{width:83px}.w117{width:117px}.w105{width:105px}
.sig{font:italic 14px/16px "Noto Sans CJK SC",sans-serif;color:#222}.sig.g{color:#999;font-weight:300}
.v.le2{text-align:left;padding-left:16px}
.v.sig.g{text-align:left;padding-left:16px}
.stamp{position:absolute;width:104px;height:104px}
.stamp text{fill:currentColor}
.st1{left:418px;top:549px;color:#f0303a;opacity:.75;font:500 13px "Noto Sans CJK SC",sans-serif}
.st2{left:365px;top:556px;color:#c0202e;opacity:.85;font:700 11px "Noto Sans CJK SC",sans-serif}
.red{position:absolute;border:4px solid #d01222}
.r1{left:118px;top:572px;width:186px;height:179px}
.r2{left:325px;top:652px;width:245px;height:86px}
.r3{left:84px;top:552px;width:219px;height:196px}
.r4{left:319px;top:640px;width:284px;height:112px}
.toast{position:absolute;left:542px;top:722px;width:199px;height:57px;background:#383a47;border-radius:4px;color:#aaa;padding:6px 12px;box-shadow:0 2px 6px #0004}
.toast header{display:flex;align-items:center;gap:10px;font-size:10px;line-height:16px}
.toast header .i10{margin-left:auto}
.toast p{display:flex;align-items:center;gap:6px;color:#fff;margin-top:6px;white-space:nowrap}
.toast p span{margin-left:2px}
.toast strong{color:#2f9bff}
.w-stat{height:13px;overflow:hidden;background:#f3f3f3;border-top:1px solid #c6c6c6;display:flex;align-items:flex-start;line-height:20px;padding:0 12px;color:#333;white-space:nowrap}
.w-stat .a{width:130px}.w-stat .b{width:74px}.w-stat .c{margin-left:9px;width:122px}.w-stat .d{width:74px}
.w-stat>svg{margin-top:4px}
.w-stat .i14{margin-right:4px}
.views{margin-left:auto;display:flex;margin-right:8px}
.views button{width:39px;height:20px}
.views .on{background:#c8c8c8}
.zm{width:18px;text-align:center;font-size:16px}
.w-stat input{width:98px;height:20px;margin:0;appearance:none;background:linear-gradient(#666,#666) 0 9px/100% 1px no-repeat}
.w-stat input::-webkit-slider-thumb{appearance:none;width:5px;height:14px;background:#444}
.pc{width:34px;text-align:right}
```
